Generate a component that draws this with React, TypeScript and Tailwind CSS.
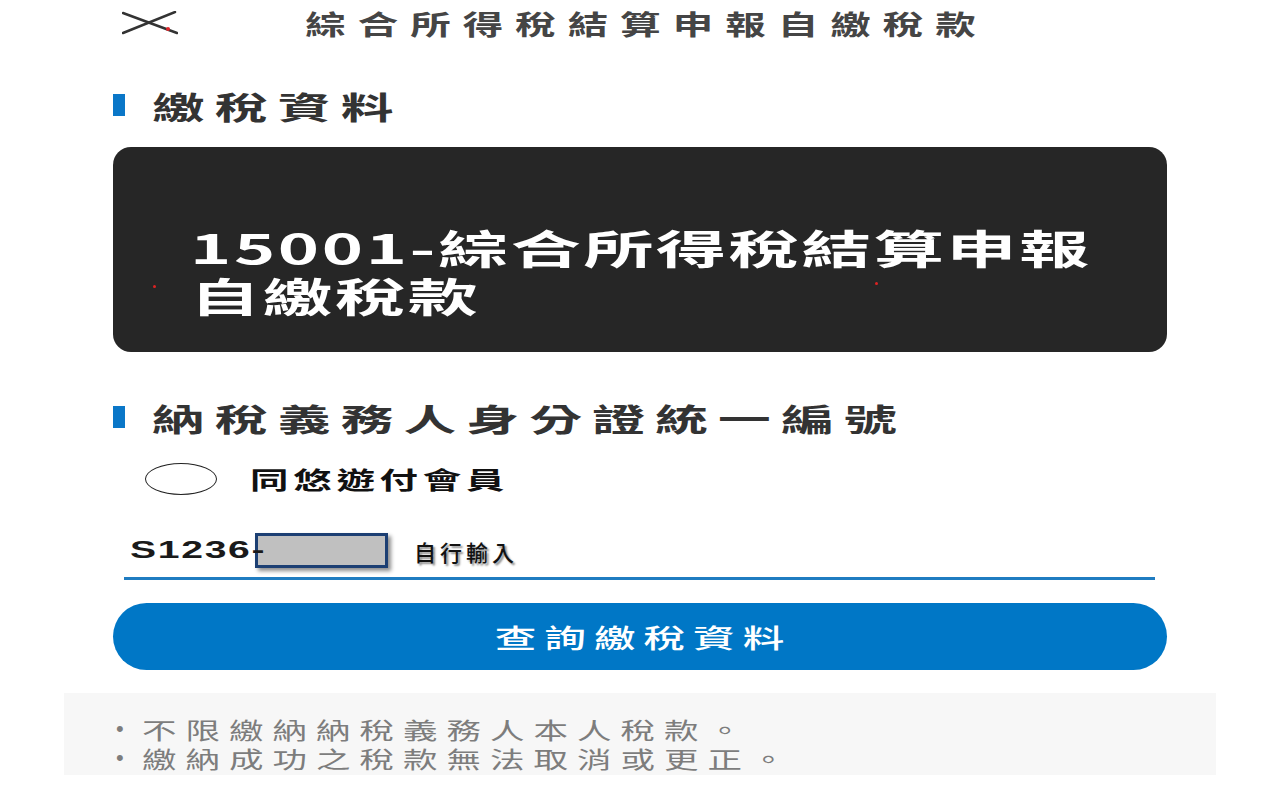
const cjk = "font-['Noto_Sans_CJK_TC','Noto_Sans',sans-serif]";

const CloseIcon = () => (
    <svg width="56" height="24" viewBox="0 0 56 24" fill="none">
        <line x1="1" y1="2" x2="55" y2="22" stroke="#333" strokeWidth="2.5" strokeLinecap="round" />
        <line x1="53" y1="1" x2="1" y2="22" stroke="#333" strokeWidth="2.5" strokeLinecap="round" />
        <circle cx="46" cy="18" r="2" fill="#e0262b" />
    </svg>
);

const SectionTitle = ({ text }: { text: string }) => (
    <div className="flex h-[40px] items-center">
        <span className="h-[22px] w-[12px] bg-[#0a77c8]" />
        <span className="ml-[27px] inline-block origin-left scale-x-[1.7] whitespace-nowrap text-[31px] font-bold leading-none tracking-[6px] text-[#333]">
            {text}
        </span>
    </div>
);

const notes = ['不限繳納納稅義務人本人稅款。', '繳納成功之稅款無法取消或更正。'];

export default function App() {
    return (
        <div className={`min-h-[790px] overflow-hidden bg-white ${cjk}`}>
            <header className="grid h-[46px] grid-cols-[1fr_auto_1fr] items-center">
                <div className="pl-[122px]">
                    <CloseIcon />
                </div>
                <h1 className="inline-block scale-x-[1.5] whitespace-nowrap pl-[8px] text-[27px] font-bold leading-none tracking-[8px] text-[#454545]">
                    綜合所得稅結算申報自繳稅款
                </h1>
                <div />
            </header>

            <main className="mx-[113px] w-[1054px]">
                <div className="mt-[39px]">
                    <SectionTitle text="繳稅資料" />
                </div>

                <div className="relative mt-[22px] h-[205px] rounded-[18px] bg-[#262626] pl-[77px] pt-[76px] text-[40px] font-bold leading-[48px] text-white">
                    <span className="block w-fit origin-left scale-x-[1.75] whitespace-nowrap tracking-[1.5px]">
                        15001-綜合所得稅結算申報
                    </span>
                    <span className="block w-fit origin-left scale-x-[1.75] whitespace-nowrap tracking-[1.5px]">
                        自繳稅款
                    </span>
                    <span className="absolute left-[40px] top-[138px] h-[3px] w-[3px] rounded-full bg-[#d22]" />
                    <span className="absolute left-[762px] top-[135px] h-[3px] w-[3px] rounded-full bg-[#d22]" />
                </div>

                <div className="mt-[45px]">
                    <SectionTitle text="納稅義務人身分證統一編號" />
                </div>

                <div className="mt-[26px] flex h-[32px] items-center pl-[32px]">
                    <span className="h-[32px] w-[72px] rounded-[50%] border-[1.5px] border-[#222]" />
                    <span className="ml-[33px] inline-block origin-left scale-x-[1.6] whitespace-nowrap text-[24px] font-bold leading-none tracking-[3px] text-[#111]">
                        同悠遊付會員
                    </span>
                </div>

                <div className="ml-[11px] mr-[12px] mt-[38px] border-b-[3px] border-[#1f7cc1] pb-[9px]">
                    <div className="flex h-[35px] items-center pl-[6px]">
                        <div className="w-[125px]">
                            <span className="inline-block origin-left scale-x-[1.7] whitespace-nowrap font-['Liberation_Sans',sans-serif] text-[23px] font-bold leading-none tracking-[1px] text-[#1a1a1a]">
                                S1236-
                            </span>
                        </div>
                        <div className="h-[35px] w-[133px] border-[3px] border-[#1c3f73] bg-[#c0c0c0] shadow-[3px_3px_4px_rgba(0,0,0,0.45)]" />
                        <span className="ml-[26px] whitespace-nowrap text-[22px] font-medium leading-none tracking-[4px] text-[#111] [text-shadow:2px_2px_2px_rgba(0,0,0,0.45)]">
                            自行輸入
                        </span>
                    </div>
                </div>

                <button className="mt-[23px] flex h-[67px] w-full items-center justify-center rounded-full bg-[#0077c6]">
                    <span className="inline-block scale-x-[1.6] whitespace-nowrap pl-[5px] text-[26px] font-medium leading-none tracking-[5px] text-white">
                        查詢繳稅資料
                    </span>
                </button>
            </main>

            <section className="mx-[64px] mt-[23px] h-[82px] bg-[#f7f7f7] pl-[52px] pt-[21px]">
                {notes.map((note) => (
                    <div key={note} className="flex h-[29px] items-center text-[#7d7d7d]">
                        <span className="w-[26px] font-['Liberation_Sans',sans-serif] text-[22px] leading-none">•</span>
                        <span className="inline-block origin-left scale-x-[1.5] whitespace-nowrap text-[23px] leading-[24px] tracking-[6px]">
                            {note}
                        </span>
                    </div>
                ))}
            </section>
        </div>
    );
}
